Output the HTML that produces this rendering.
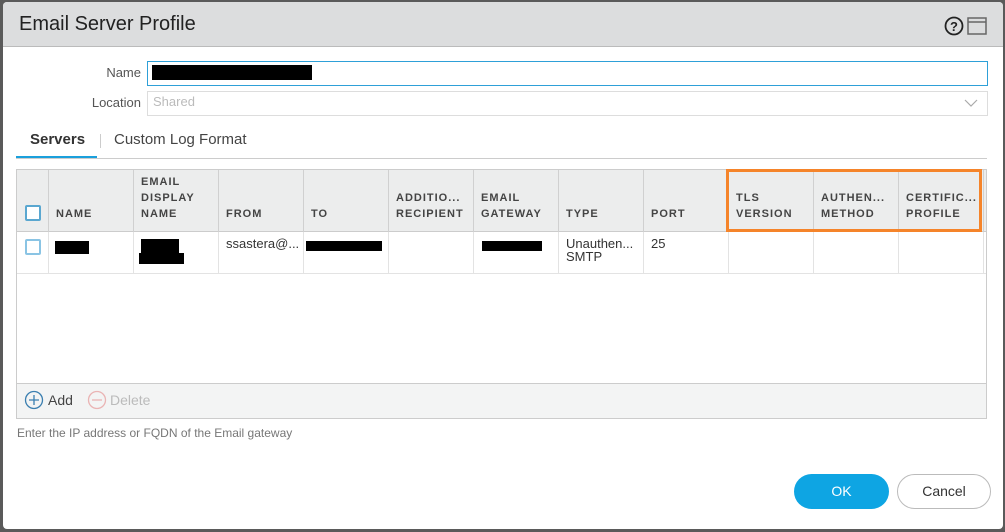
<!DOCTYPE html>
<html><head><style>
*{box-sizing:border-box;margin:0;padding:0}
body{width:1005px;height:532px;background:#5a5a5a;font-family:"Liberation Sans",sans-serif;position:relative;overflow:hidden;color:#333}
.dlg{position:absolute;left:3px;top:2px;width:1000px;height:527px;background:#fff;border-radius:4px;overflow:hidden}
.hdr{position:absolute;left:0;top:0;width:100%;height:45px;background:#dcddde;border-bottom:1px solid #bbb}
.hdr .t{position:absolute;left:16px;top:11px;font-size:20px;color:#222}
.a{position:absolute}
.lbl{font-size:13px;color:#555;text-align:right;width:80px}
.inp{border:1px solid #ddd;background:#fff}
.th{position:absolute;top:0;height:62px;border-right:1px solid #d0d0d0;font-size:11px;font-weight:bold;letter-spacing:1px;color:#444;padding:0 0 10px 7px;display:flex;flex-direction:column;justify-content:flex-end;line-height:16px}
.td{position:absolute;top:62px;height:41px;border-right:1px solid #e3e3e3;font-size:13px;padding:5px 0 0 7px;color:#333;line-height:13px}
.blk{background:#000;position:absolute}
.cb{position:absolute;width:16px;height:16px;border:2px solid #5aa7d0;border-radius:2px;background:#fff}
</style></head><body>
<div class="dlg">
<div class="hdr"><div class="t">Email Server Profile</div>
<svg class="a" style="left:941px;top:14px" width="20" height="20" viewBox="0 0 20 20"><circle cx="10" cy="10" r="8.5" fill="none" stroke="#222" stroke-width="1.8"/><text x="10" y="15" text-anchor="middle" font-size="13" font-weight="bold" font-family="Liberation Sans" fill="#222">?</text></svg>
<svg class="a" style="left:964px;top:15px" width="20" height="18"><rect x="1" y="1" width="18" height="16" fill="none" stroke="#666" stroke-width="1.5"/><line x1="1" y1="5" x2="19" y2="5" stroke="#666" stroke-width="1.5"/></svg>
</div>
<div class="a lbl" style="left:58px;top:63px">Name</div>
<div class="a" style="left:144px;top:59px;width:841px;height:25px;border:1px solid #2ea0d8;background:#fff"></div>
<div class="blk" style="left:149px;top:63px;width:160px;height:15px"></div>
<div class="a lbl" style="left:58px;top:93px">Location</div>
<div class="a inp" style="left:144px;top:89px;width:841px;height:25px"></div>
<div class="a" style="left:150px;top:92px;font-size:13px;color:#bbb">Shared</div>
<svg class="a" style="left:960px;top:96px" width="16" height="10"><polyline points="2,2 8,8 14,2" fill="none" stroke="#aaa" stroke-width="1.2"/></svg>
<div class="a" style="left:27px;top:129px;font-size:15px;font-weight:bold;color:#333">Servers</div>
<div class="a" style="left:97px;top:132px;width:1px;height:14px;background:#ccc"></div>
<div class="a" style="left:111px;top:129px;font-size:15px;color:#444">Custom Log Format</div>
<div class="a" style="left:13px;top:154px;width:81px;height:3px;background:#1aa0dc"></div>
<div class="a" style="left:13px;top:156px;width:971px;height:1px;background:#ccc"></div>
<div class="a" style="left:13px;top:167px;width:971px;height:250px;border:1px solid #ccc;background:#fff">
 <div class="a" style="left:0;top:0;width:969px;height:62px;background:#eceded;border-bottom:1px solid #ccc"></div>
 <div class="th" style="left:0;width:32px"></div>
 <div class="cb" style="left:8px;top:35px"></div>
 <div class="th" style="left:32px;width:85px">NAME</div>
 <div class="th" style="left:117px;width:85px">EMAIL<br>DISPLAY<br>NAME</div>
 <div class="th" style="left:202px;width:85px">FROM</div>
 <div class="th" style="left:287px;width:85px">TO</div>
 <div class="th" style="left:372px;width:85px">ADDITIO...<br>RECIPIENT</div>
 <div class="th" style="left:457px;width:85px">EMAIL<br>GATEWAY</div>
 <div class="th" style="left:542px;width:85px">TYPE</div>
 <div class="th" style="left:627px;width:85px">PORT</div>
 <div class="th" style="left:712px;width:85px">TLS<br>VERSION</div>
 <div class="th" style="left:797px;width:85px">AUTHEN...<br>METHOD</div>
 <div class="th" style="left:882px;width:85px">CERTIFIC...<br>PROFILE</div>
 <div class="td" style="left:0;width:32px"></div>
 <div class="cb" style="left:8px;top:69px;border-color:#8ac4e4"></div>
 <div class="td" style="left:32px;width:85px"></div>
 <div class="td" style="left:117px;width:85px"></div>
 <div class="td" style="left:202px;width:85px">ssastera@...</div>
 <div class="td" style="left:287px;width:85px"></div>
 <div class="td" style="left:372px;width:85px"></div>
 <div class="td" style="left:457px;width:85px"></div>
 <div class="td" style="left:542px;width:85px">Unauthen...<br>SMTP</div>
 <div class="td" style="left:627px;width:85px">25</div>
 <div class="td" style="left:712px;width:85px"></div>
 <div class="td" style="left:797px;width:85px"></div>
 <div class="td" style="left:882px;width:85px"></div>
 <div class="a" style="left:0;top:103px;width:969px;height:1px;background:#e3e3e3"></div>
 <div class="blk" style="left:38px;top:71px;width:34px;height:13px"></div>
 <div class="blk" style="left:124px;top:69px;width:38px;height:14px"></div>
 <div class="blk" style="left:122px;top:83px;width:45px;height:11px"></div>
 <div class="blk" style="left:289px;top:71px;width:76px;height:10px"></div>
 <div class="blk" style="left:465px;top:71px;width:60px;height:10px"></div>
 <div class="a" style="left:0;top:213px;width:969px;height:35px;background:#f3f4f4;border-top:1px solid #ccc"></div>
 <svg class="a" style="left:7px;top:220px" width="20" height="20"><circle cx="10" cy="10" r="8.5" fill="none" stroke="#3b7fb0" stroke-width="1.3"/><path d="M10 5v10M5 10h10" stroke="#3b7fb0" stroke-width="1.3"/></svg>
 <div class="a" style="left:31px;top:222px;font-size:14px;color:#444">Add</div>
 <svg class="a" style="left:70px;top:220px" width="20" height="20"><circle cx="10" cy="10" r="8.5" fill="none" stroke="#eab4b4" stroke-width="1.3"/><path d="M5 10h10" stroke="#eab4b4" stroke-width="1.3"/></svg>
 <div class="a" style="left:93px;top:222px;font-size:14px;color:#bbb">Delete</div>
</div>
<div class="a" style="left:723px;top:167px;width:256px;height:63px;border:3px solid #f5842a"></div>
<div class="a" style="left:14px;top:424px;font-size:12px;color:#777">Enter the IP address or FQDN of the Email gateway</div>
<div class="a" style="left:791px;top:472px;width:95px;height:35px;border-radius:18px;background:#0ea5e3;color:#fff;font-size:14px;text-align:center;line-height:35px">OK</div>
<div class="a" style="left:894px;top:472px;width:94px;height:35px;border-radius:18px;border:1px solid #bbb;background:#fff;color:#333;font-size:14px;text-align:center;line-height:33px">Cancel</div>
</div>
</body></html>
